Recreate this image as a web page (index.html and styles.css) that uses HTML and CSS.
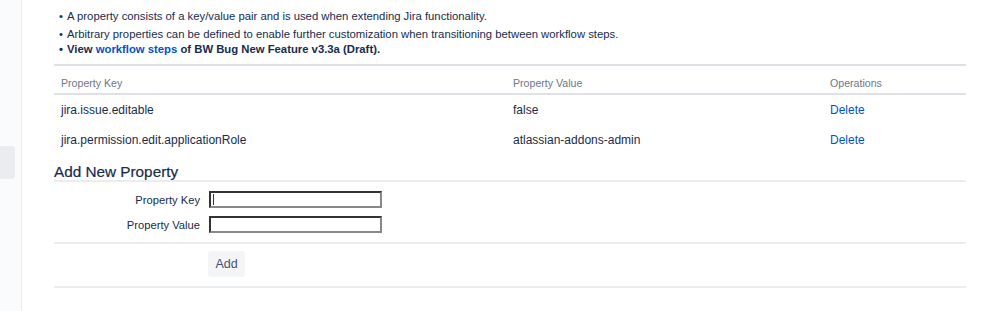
FILE: index.html
```html
<!DOCTYPE html>
<html>
<head>
<meta charset="utf-8">
<link rel="stylesheet" href="styles.css">
</head>
<body>
<div class="page">
  <aside class="sidebar">
    <div class="side-item"></div>
  </aside>
  <main class="main">
    <ul class="notes">
      <li class="note">A property consists of a key/value pair and is used when extending Jira functionality.</li>
      <li class="note">Arbitrary properties can be defined to enable further customization when transitioning between workflow steps.</li>
      <li class="note note-strong">View <a class="link" href="#">workflow steps</a> of BW Bug New Feature v3.3a (Draft).</li>
    </ul>
    <table class="props">
      <thead>
        <tr>
          <th class="col-key">Property Key</th>
          <th class="col-value">Property Value</th>
          <th class="col-ops">Operations</th>
        </tr>
      </thead>
      <tbody>
        <tr>
          <td>jira.issue.editable</td>
          <td>false</td>
          <td><a class="link" href="#">Delete</a></td>
        </tr>
        <tr>
          <td>jira.permission.edit.applicationRole</td>
          <td>atlassian-addons-admin</td>
          <td><a class="link" href="#">Delete</a></td>
        </tr>
      </tbody>
    </table>
    <form class="add-form">
      <h2 class="form-title">Add New Property</h2>
      <div class="fields">
        <div class="field">
          <label class="field-label" for="pkey">Property Key</label>
          <span class="input-wrap"><input class="field-input" id="pkey" type="text"><span class="caret"></span></span>
        </div>
        <div class="field">
          <label class="field-label" for="pval">Property Value</label>
          <span class="input-wrap"><input class="field-input" id="pval" type="text"></span>
        </div>
      </div>
      <div class="buttons">
        <button class="btn" type="button">Add</button>
      </div>
    </form>
  </main>
</div>
</body>
</html>
```
FILE: styles.css
```css
html, body {
  margin: 0;
  padding: 0;
  background: #fff;
}
body {
  font-family: "Liberation Sans", Arial, sans-serif;
  color: #172b4d;
  font-size: 12px;
}
.page {
  display: flex;
  min-height: 311px;
}
.sidebar {
  width: 22px;
  flex: 0 0 22px;
  background: #fafbfc;
  border-right: 1px solid #ebecf0;
  padding-top: 146px;
  box-sizing: border-box;
}
.side-item {
  width: 15px;
  height: 33px;
  background: #ebecf0;
  border-radius: 0 3px 3px 0;
}
.main {
  flex: 1;
  padding: 0 33px 0 32px;
}
.notes {
  list-style: none;
  margin: 9px 0 0 0;
  padding: 0 0 0 5px;
}
.note {
  position: relative;
  padding-left: 8px;
  font-size: 11.3px;
  line-height: 15px;
}
.note:first-child {
  margin-bottom: 3px;
}
.note::before {
  content: "•";
  position: absolute;
  left: 0;
  top: 0;
}
.note-strong {
  font-weight: bold;
}
.link {
  color: #0052cc;
  text-decoration: none;
}
.props {
  width: 100%;
  border-collapse: collapse;
  margin-top: 7px;
  border-top: 2px solid #dfe1e6;
}
.props th {
  text-align: left;
  font-weight: normal;
  font-size: 10.6px;
  line-height: 12px;
  color: #6b778c;
  padding: 11px 7px 4px 7px;
  border-bottom: 2px solid #dfe1e6;
}
.props td {
  padding: 0 7px;
  height: 30px;
  vertical-align: middle;
  font-size: 12px;
}
.col-key { width: 438px; }
.col-value { width: 303px; }
.add-form {
  margin: 0;
}
.form-title {
  margin: 0;
  font-size: 15.3px;
  font-weight: normal;
  line-height: 16px;
  padding-top: 9px;
  padding-bottom: 0;
  border-bottom: 2px solid #ebecf0;
  color: #172b4d;
  -webkit-text-stroke: 0.2px #172b4d;
}
.fields {
  display: flex;
  flex-direction: column;
  gap: 8px;
  padding: 9px 0 9px 0;
  border-bottom: 2px solid #ebecf0;
}
.field {
  display: flex;
  align-items: center;
}
.field-label {
  width: 146px;
  text-align: right;
  padding-right: 9px;
  font-size: 11.2px;
}
.input-wrap {
  position: relative;
  display: block;
  height: 17px;
}
.field-input {
  display: block;
  width: 173px;
  height: 17px;
  box-sizing: border-box;
  margin: 0;
  border: 2px solid #333;
  border-right-color: #888;
  border-bottom-color: #888;
  padding: 0 2px;
  font: inherit;
}
.caret {
  position: absolute;
  left: 4px;
  top: 3px;
  width: 1px;
  height: 11px;
  background: #333;
}
.buttons {
  padding: 7px 0 9px 154px;
  border-bottom: 2px solid #ebecf0;
}
.btn {
  display: block;
  width: 37px;
  height: 26px;
  border: none;
  border-radius: 3px;
  background: #f4f5f7;
  color: #42526e;
  font: inherit;
  font-size: 12.5px;
  padding: 0;
}
```
